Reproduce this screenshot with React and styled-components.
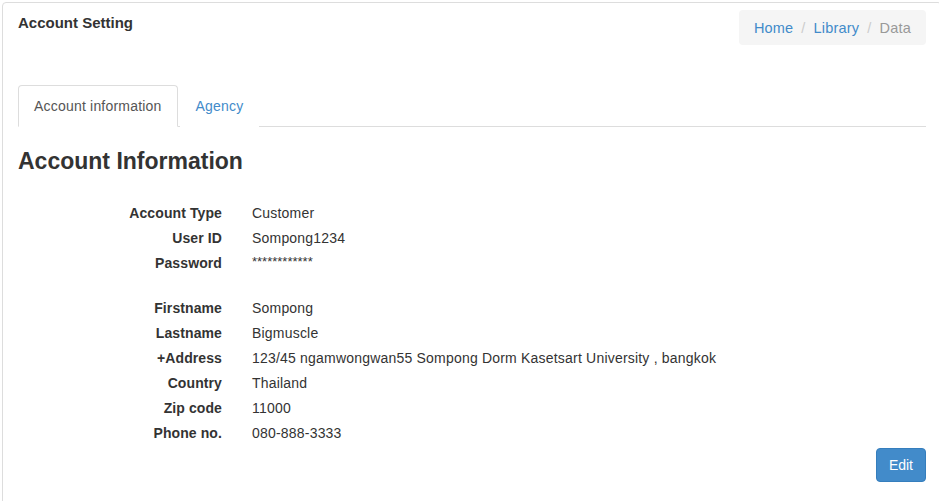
import React from 'react'
import styled, { createGlobalStyle } from 'styled-components'

const GlobalStyle = createGlobalStyle`
	body {
		margin: 0;
		background: #fff;
		font-family: 'Liberation Sans', Arial, sans-serif;
		font-size: 14px;
		color: #333;
	}
`

const accountRows = [
	['Account Type', 'Customer'],
	['User ID', 'Sompong1234'],
	['Password', '************', true],
]

const personalRows = [
	['Firstname', 'Sompong'],
	['Lastname', 'Bigmuscle'],
	['+Address', '123/45 ngamwongwan55 Sompong Dorm Kasetsart University , bangkok'],
	['Country', 'Thailand'],
	['Zip code', '11000'],
	['Phone no.', '080-888-3333'],
]

function InfoList({ rows }) {
	return (
		<DetailList>
			{rows.map(([label, value, secret]) => (
				<React.Fragment key={label}>
					<Term>{label}</Term>
					<Value $secret={secret}>{value}</Value>
				</React.Fragment>
			))}
		</DetailList>
	)
}

function App() {
	return (
		<Page>
			<GlobalStyle />
			<Panel>
				<Header>
					<Title>Account Setting</Title>
					<Breadcrumb>
						<Crumb href='#'>Home</Crumb>
						<Divider>/</Divider>
						<Crumb href='#'>Library</Crumb>
						<Divider>/</Divider>
						<CrumbActive>Data</CrumbActive>
					</Breadcrumb>
				</Header>

				<Tabs>
					<Tab $active>Account information</Tab>
					<Tab>Agency</Tab>
				</Tabs>

				<Heading>Account Information</Heading>

				<InfoList rows={accountRows} />
				<Spacer />
				<InfoList rows={personalRows} />

				<Footer>
					<EditButton>Edit</EditButton>
				</Footer>
			</Panel>
		</Page>
	)
}

export default App

const Page = styled.div`
	padding: 2px 0 0 2px;
	overflow: hidden;
	height: 499px;
`

const Panel = styled.div`
	width: 908px;
	min-height: 520px;
	border: 1px solid #ddd;
	border-radius: 4px;
	padding: 7px 15px 0 15px;
`

const Header = styled.div`
	display: flex;
	justify-content: space-between;
	align-items: flex-start;
`

const Title = styled.h2`
	margin: 2px 0 0 0;
	font-size: 15px;
	font-weight: bold;
	line-height: 22px;
	color: #333;
`

const Breadcrumb = styled.div`
	display: flex;
	align-items: center;
	background: #f5f5f5;
	border-radius: 4px;
	padding: 9px 15px 7px 15px;
	line-height: 19px;
	font-size: 14.5px;
	letter-spacing: 0.2px;
`

const Crumb = styled.a`
	color: #428bca;
	text-decoration: none;
`

const CrumbActive = styled.span`
	color: #999;
`

const Divider = styled.span`
	color: #ccc;
	padding: 0 8px;
`

const Tabs = styled.div`
	display: flex;
	margin-top: 40px;
	border-bottom: 1px solid #ddd;
`

const Tab = styled.a`
	display: block;
	padding: 10px 15px;
	line-height: 20px;
	letter-spacing: 0.2px;
	margin-bottom: -1px;
	margin-right: 2px;
	border: 1px solid ${(p) => (p.$active ? '#ddd' : 'transparent')};
	border-bottom-color: ${(p) => (p.$active ? '#fff' : 'transparent')};
	border-radius: 4px 4px 0 0;
	background: #fff;
	color: ${(p) => (p.$active ? '#555' : '#428bca')};
	cursor: pointer;
`

const Heading = styled.h3`
	margin: 21px 0 0 0;
	font-size: 23px;
	font-weight: bold;
	line-height: 26px;
	color: #333;
`

const DetailList = styled.dl`
	display: grid;
	grid-template-columns: 204px 1fr;
	column-gap: 30px;
	margin: 0;
	&:first-of-type {
		margin-top: 27px;
	}
`

const Term = styled.dt`
	text-align: right;
	font-weight: bold;
	line-height: 25px;
	letter-spacing: 0.1px;
`

const Value = styled.dd`
	margin: 0;
	line-height: ${(p) => (p.$secret ? '22px' : '25px')};
	padding-bottom: ${(p) => (p.$secret ? '3px' : '0')};
	font-size: ${(p) => (p.$secret ? '13px' : '14px')};
	letter-spacing: ${(p) => (p.$secret ? '0' : '0.2px')};
`

const Spacer = styled.div`
	height: 20px;
`

const Footer = styled.div`
	display: flex;
	justify-content: flex-end;
	margin-top: 2px;
`

const EditButton = styled.button`
	font-family: inherit;
	font-size: 14px;
	line-height: 20px;
	padding: 6px 12px;
	color: #fff;
	background: #428bca;
	border: 1px solid #357ebd;
	border-radius: 4px;
	cursor: pointer;
`
